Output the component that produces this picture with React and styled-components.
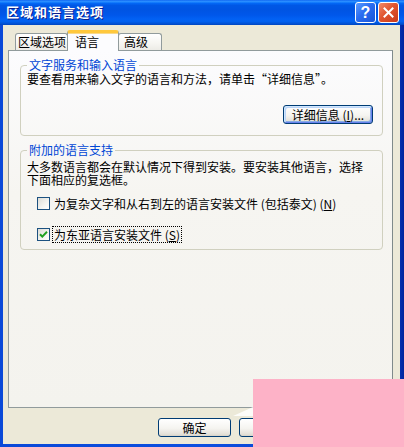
import React from 'react'
import styled, { createGlobalStyle } from 'styled-components';

const GlobalStyle = createGlobalStyle`
  html, body {
    margin: 0;
    padding: 0;
    background: #ffffff;
  }
  body {
    font-family: "Noto Sans CJK SC", "Noto Sans", sans-serif;
  }
  * {
    box-sizing: border-box;
  }
`

const App = () => {
    return (
        <>
            <GlobalStyle />
            <Window>
                <TitleBar>
                    <Title>区域和语言选项</Title>
                    <TitleButtons>
                        <HelpButton>?</HelpButton>
                        <CloseButton>
                            <svg width="11" height="11" viewBox="0 0 11 11">
                                <path d="M1.5 1.5 L9.5 9.5 M9.5 1.5 L1.5 9.5" stroke="#fff" strokeWidth="2" strokeLinecap="square" />
                            </svg>
                        </CloseButton>
                    </TitleButtons>
                </TitleBar>
                <Body>
                    <TabRow>
                        <Tab $w={53} $pl={2}>区域选项</Tab>
                        <Tab $w={52} $pl={7} $active>语言</Tab>
                        <Tab $w={44} $pl={5}>高级</Tab>
                    </TabRow>
                    <Panel>
                        <GroupBox $top={7}>
                            <Legend>文字服务和输入语言</Legend>
                            <GroupText>要查看用来输入文字的语言和方法，请单击“详细信息”。</GroupText>
                            <GroupActions>
                                <PushButton $w={90} $focused>详细信息 (<u>I</u>)...</PushButton>
                            </GroupActions>
                        </GroupBox>
                        <GroupBox $top={7} $bottom={7}>
                            <Legend>附加的语言支持</Legend>
                            <GroupText $tight>
                                大多数语言都会在默认情况下得到安装。要安装其他语言，选择<br />
                                下面相应的复选框。
                            </GroupText>
                            <CheckRow $top={10}>
                                <CheckBox />
                                <CheckLabel>为复杂文字和从右到左的语言安装文件 (包括泰文) (<u>N</u>)</CheckLabel>
                            </CheckRow>
                            <CheckRow $top={16}>
                                <CheckBox>
                                    <svg width="11" height="11" viewBox="0 0 11 11">
                                        <path d="M2 5.2 L4.3 7.6 L9 2.8" stroke="#21a121" strokeWidth="2" fill="none" />
                                    </svg>
                                </CheckBox>
                                <CheckLabel $focused>为东亚语言安装文件 (<u>S</u>)</CheckLabel>
                            </CheckRow>
                        </GroupBox>
                    </Panel>
                    <ButtonBar>
                        <PushButton $w={73}>确定</PushButton>
                        <PushButton $w={73}>取消</PushButton>
                        <PushButton $w={73}>应用 (<u>A</u>)</PushButton>
                    </ButtonBar>
                </Body>
                <Watermark>
                    <svg width="20" height="10" viewBox="0 0 20 10">
                        <polygon points="0,10 20,1 20,10" fill="rgba(255,255,255,0.85)" />
                    </svg>
                </Watermark>
            </Window>
        </>
    )
}

const Window = styled.div({
    position: 'relative',
    width: '404px',
    height: '447px',
    display: 'flex',
    flexDirection: 'column',
    background: 'linear-gradient(90deg, #0a49d8 0%, #0b4fe0 50%, #0a3cc4 98%, #00249c 100%)',
    overflow: 'hidden'
})

const TitleBar = styled.div({
    height: '25px',
    flex: 'none',
    display: 'flex',
    alignItems: 'center',
    justifyContent: 'space-between',
    padding: '0 5px 0 6px',
    background: 'linear-gradient(180deg, #0058ee 0%, #3593ff 4%, #1c86ff 8%, #0366f4 14%, #0057e5 22%, #0054e3 40%, #0057ea 60%, #0261f4 76%, #0060ee 86%, #0052d6 94%, #0045bf 100%)'
})

const Title = styled.div({
    color: '#ffffff',
    fontSize: '13px',
    fontWeight: '700',
    letterSpacing: '1px',
    lineHeight: '16px',
    textShadow: '1px 1px 0 #0a1e8c',
    marginTop: '-1px'
})

const TitleButtons = styled.div({
    display: 'flex',
    gap: '2px'
})

const HelpButton = styled.div({
    width: '21px',
    height: '21px',
    border: '1px solid #ffffff',
    borderRadius: '3px',
    background: 'linear-gradient(135deg, #5b9bff 0%, #2a6cf0 45%, #1a55d8 100%)',
    color: '#ffffff',
    fontFamily: '"Liberation Sans", Arial, sans-serif',
    fontSize: '16px',
    fontWeight: '700',
    lineHeight: '19px',
    textAlign: 'center'
})

const CloseButton = styled.div({
    width: '21px',
    height: '21px',
    border: '1px solid #ffffff',
    borderRadius: '3px',
    background: 'linear-gradient(135deg, #f08a6a 0%, #e0552f 45%, #c9391a 100%)',
    display: 'flex',
    alignItems: 'center',
    justifyContent: 'center'
})

const Body = styled.div({
    flex: 1,
    display: 'flex',
    flexDirection: 'column',
    margin: '0 4px 3px 3px',
    padding: '5px 7px 7px 5px',
    backgroundColor: '#ece9d8'
})

const TabRow = styled.div({
    height: '21px',
    display: 'flex',
    alignItems: 'flex-end',
    paddingLeft: '7px',
    position: 'relative',
    zIndex: 1
})

const Tab = styled.div(props => ({
    width: `${props.$w}px`,
    paddingLeft: `${props.$pl}px`,
    fontSize: '12px',
    color: '#000',
    whiteSpace: 'nowrap',
    border: '1px solid #919b9c',
    borderBottom: 'none',
    borderRadius: '3px 3px 0 0',
    ...(props.$active ? {
        height: '21px',
        lineHeight: '17px',
        borderTop: '3px solid #ffc83c',
        boxShadow: 'inset 0 1px 0 #f9d98a',
        background: '#fcfcfe',
        marginLeft: '-1px',
        marginRight: '-1px'
    } : {
        height: '17px',
        lineHeight: '16px',
        marginBottom: '1px',
        background: 'linear-gradient(180deg, #ffffff 0%, #f6f5f1 60%, #ecebe6 100%)'
    })
}))

const Panel = styled.div({
    flex: 1,
    marginTop: '-1px',
    padding: '0 9px 0 11px',
    border: '1px solid #919b9c',
    borderRightColor: '#7f8a8b',
    background: 'linear-gradient(180deg, #fcfcfe 0%, #f6f5f1 40%, #f4f3ee 100%)',
    display: 'flex',
    flexDirection: 'column'
})

const GroupBox = styled.fieldset(props => ({
    margin: `${props.$top}px 0 0 0`,
    padding: `0 9px ${props.$bottom ?? 11}px 6px`,
    minInlineSize: 0,
    border: '1px solid #d0d0bf',
    borderRadius: '4px'
}))

const Legend = styled.legend({
    padding: '0 2px',
    fontSize: '12px',
    lineHeight: '14px',
    color: '#0046d5'
})

const GroupText = styled.div(props => ({
    fontSize: '12px',
    lineHeight: props.$tight ? '13px' : '14px',
    marginTop: props.$tight ? '3px' : '0',
    color: '#000',
    whiteSpace: 'nowrap'
}))

const GroupActions = styled.div({
    display: 'flex',
    justifyContent: 'flex-end',
    marginTop: '19px'
})

const PushButton = styled.div(props => ({
    width: `${props.$w}px`,
    height: '19px',
    fontSize: '12px',
    lineHeight: '17px',
    textAlign: 'center',
    color: '#000',
    whiteSpace: 'nowrap',
    border: '1px solid #003c74',
    borderRadius: '3px',
    background: 'linear-gradient(180deg, #ffffff 0%, #f5f4f0 55%, #e3e0d8 90%, #d6d0c5 100%)',
    boxShadow: props.$focused ? 'inset 1px 1px 0 #cee7ff, inset -1px -1px 0 #6982ee, inset 2px 2px 0 #bcd4f6, inset -2px -2px 0 #89ade4' : 'none',
    u: {
        textDecoration: 'underline'
    }
}))

const CheckRow = styled.div(props => ({
    display: 'flex',
    alignItems: 'center',
    gap: '3px',
    marginTop: `${props.$top}px`,
    marginLeft: '10px',
    height: '15px'
}))

const CheckBox = styled.div({
    width: '13px',
    height: '13px',
    flex: 'none',
    border: '1px solid #1c5180',
    background: 'linear-gradient(135deg, #dcdcd7 0%, #f4f4f0 60%, #ffffff 100%)',
    display: 'flex',
    alignItems: 'center',
    justifyContent: 'center'
})

const CheckLabel = styled.span(props => ({
    fontSize: '12px',
    lineHeight: '13px',
    color: '#000',
    whiteSpace: 'nowrap',
    padding: '1px 1px',
    outline: props.$focused ? '1px dotted #000' : 'none'
}))

const ButtonBar = styled.div({
    display: 'flex',
    justifyContent: 'flex-end',
    gap: '8px',
    marginTop: '10px'
})

const Watermark = styled.div({
    position: 'absolute',
    left: '253px',
    top: '379px',
    width: '151px',
    height: '68px',
    backgroundColor: '#fdb2c7',
    svg: {
        position: 'absolute',
        left: '-20px',
        top: '27px'
    }
})

export default App
